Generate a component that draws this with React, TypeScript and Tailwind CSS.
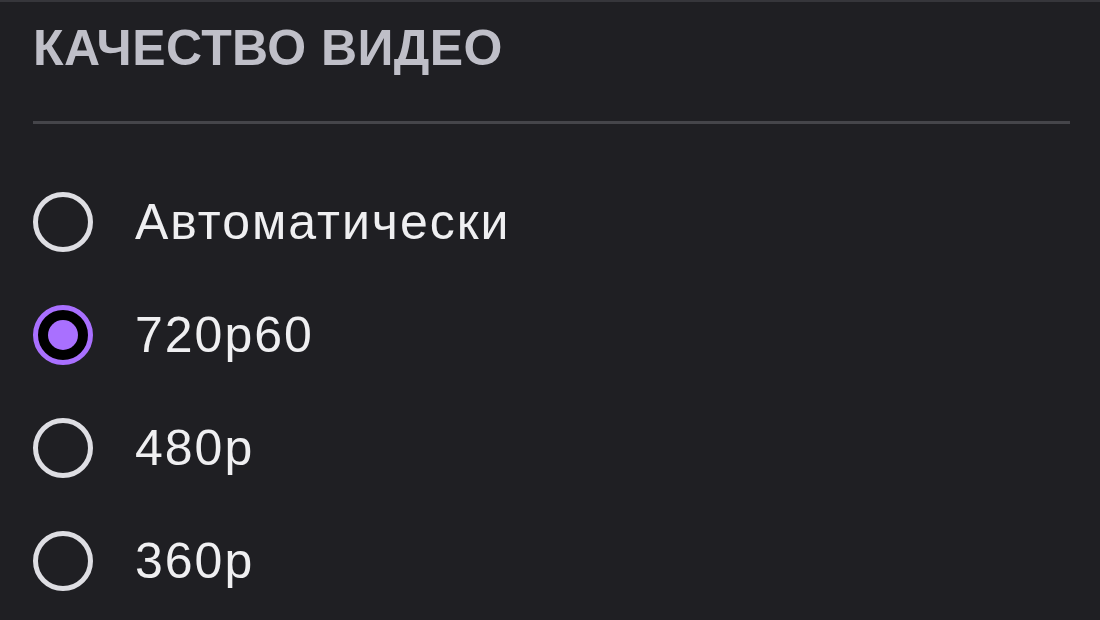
const options = [
  { label: "Автоматически", selected: false },
  { label: "720p60", selected: true },
  { label: "480p", selected: false },
  { label: "360p", selected: false },
];

function Radio({ selected }: { selected: boolean }) {
  if (selected) {
    return (
      <span className="flex h-[60px] w-[60px] shrink-0 items-center justify-center rounded-full border-[5px] border-[#a970ff] bg-black">
        <span className="h-[30px] w-[30px] rounded-full bg-[#a970ff]" />
      </span>
    );
  }
  return <span className="h-[60px] w-[60px] shrink-0 rounded-full border-[5px] border-[#dedee3]" />;
}

export default function App() {
  return (
    <div className="h-[620px] w-[1100px] overflow-hidden border-t-2 border-[#36363b] bg-[#1f1f23] font-['Liberation_Sans',Arial,sans-serif]">
      <div className="pl-[33px] pr-[30px]">
        <h2 className="pt-[20px] text-[50px] font-bold leading-[52px] tracking-[0.4px] text-[#bfbfc8]">
          КАЧЕСТВО ВИДЕО
        </h2>
        <div className="mt-[47px] h-[3px] w-full bg-[#45454a]" />
        <ul className="mt-[68px] flex flex-col gap-[53px]">
          {options.map((o) => (
            <li key={o.label} className="flex h-[60px] items-center gap-[42px]">
              <Radio selected={o.selected} />
              <span className="text-[50px] leading-none tracking-[2px] text-[#efeff1]">{o.label}</span>
            </li>
          ))}
        </ul>
      </div>
    </div>
  );
}
